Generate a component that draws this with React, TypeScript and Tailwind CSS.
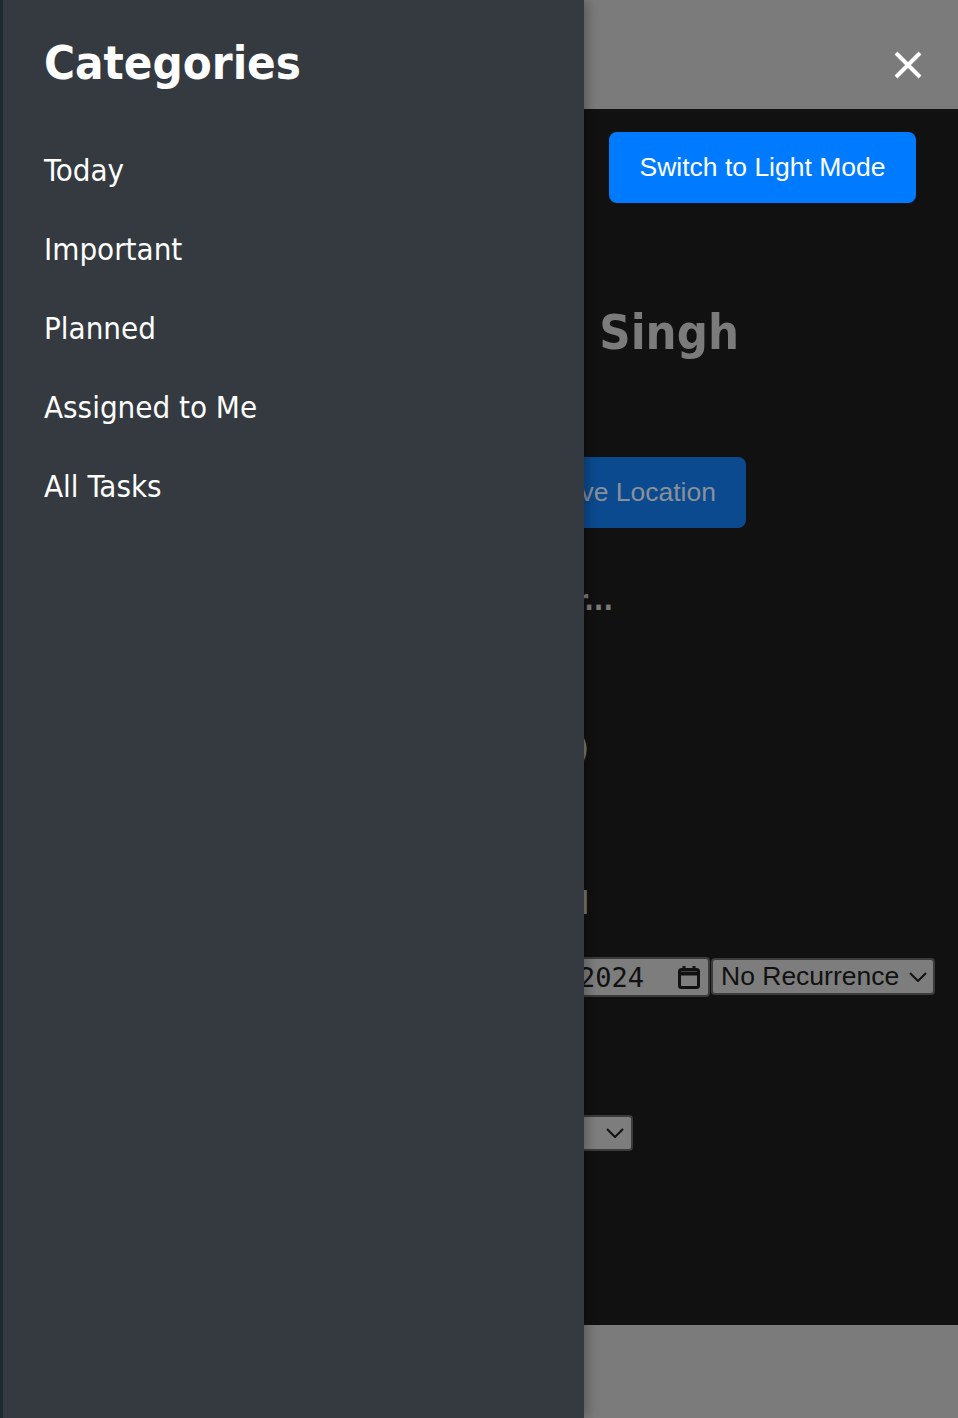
import { useState } from "react";

const categories = ["Today", "Important", "Planned", "Assigned to Me", "All Tasks"];

function CloseIcon() {
  return (
    <svg width="28" height="28" viewBox="0 0 28 28" fill="none">
      <path d="M2 2L26 26M26 2L2 26" stroke="white" strokeWidth="4" />
    </svg>
  );
}

function Chevron() {
  return (
    <svg width="18" height="10" viewBox="0 0 18 10" fill="none">
      <path d="M1 1l8 8 8-8" stroke="#111" strokeWidth="2" />
    </svg>
  );
}

function CalendarIcon() {
  return (
    <svg width="22" height="24" viewBox="0 0 22 24" fill="none">
      <rect x="1.5" y="4.5" width="19" height="18" rx="2" stroke="#111" strokeWidth="3" />
      <path d="M1.5 8.5h19" stroke="#111" strokeWidth="4" />
      <path d="M6 1v5M16 1v5" stroke="#111" strokeWidth="3" />
    </svg>
  );
}

export default function App() {
  const [open, setOpen] = useState(true);

  return (
    <div className="relative h-[1418px] w-full overflow-hidden bg-[#7b7b7c] font-['Liberation_Sans',Arial,sans-serif]">
      <header className="flex h-[109px] items-center justify-end bg-[#7b7b7c] pr-[36px]">
        <button onClick={() => setOpen(!open)} className="mt-[20px] flex h-[28px] w-[28px] items-center justify-center">
          <CloseIcon />
        </button>
      </header>

      <main className="flex h-[1216px] flex-col bg-[#111111] text-[#7b7b7b]">
        <div className="flex justify-end pr-[42px] pt-[23px]">
          <button className="h-[71px] w-[307px] rounded-[8px] bg-[#007bff] text-[26.5px] text-white">
            Switch to Light Mode
          </button>
        </div>

        <h1 className="mt-[100px] w-[739px] whitespace-nowrap text-right font-['DejaVu_Sans_Condensed','DejaVu_Sans',sans-serif] text-[48.5px] font-bold leading-[58px]">
          Jo Singh
        </h1>

        <div className="mt-[96px] flex w-[746px] justify-end">
          <button className="h-[71px] whitespace-nowrap rounded-[8px] bg-[#0b4a8f] px-[30px] text-[26.5px] text-[#8a9099]">
            Save Location
          </button>
        </div>

        <p className="mt-[56px] w-[613px] whitespace-nowrap text-right font-['DejaVu_Sans_Condensed','DejaVu_Sans',sans-serif] text-[28px] font-bold leading-[34px]">
          weather...
        </p>

        <p className="mt-[110px] w-[589px] whitespace-nowrap text-right font-['DejaVu_Sans_Condensed','DejaVu_Sans',sans-serif] text-[32px] leading-[40px]">
          (0)
        </p>

        <h2 className="mt-[115px] w-[589px] whitespace-nowrap text-right font-['DejaVu_Sans_Condensed','DejaVu_Sans',sans-serif] text-[32px] font-bold leading-[40px]">
          Planned
        </h2>

        <div className="mt-[34px] flex w-[935px] items-start justify-end">
          <div className="flex h-[40px] items-center rounded-[4px] border-2 border-[#3b3b3b] bg-[#7d7d7d] px-[8px] text-[#111]">
            <span className="whitespace-nowrap font-['DejaVu_Sans_Mono',monospace] text-[27px] leading-none">12/31/2024</span>
            <span className="ml-[34px] flex">
              <CalendarIcon />
            </span>
          </div>
          <div className="ml-[1px] mt-[1px] flex h-[37px] w-[224px] items-center justify-between rounded-[4px] border-2 border-[#3b3b3b] bg-[#7d7d7d] pl-[8px] pr-[6px] text-[#111]">
            <span className="whitespace-nowrap text-[26.5px] leading-none">No Recurrence</span>
            <Chevron />
          </div>
        </div>

        <div className="mt-[118px] flex w-[633px] justify-end">
          <div className="flex h-[36px] w-[180px] items-center justify-between rounded-[4px] border-2 border-[#3b3b3b] bg-[#7d7d7d] pl-[8px] pr-[7px] text-[#111]">
            <span className="whitespace-nowrap text-[26.5px] leading-none">Medium</span>
            <Chevron />
          </div>
        </div>
      </main>

      <footer className="h-[93px] bg-[#7b7b7c]" />

      {open && (
        <aside className="absolute inset-y-0 left-0 flex w-[584px] flex-col border-l-[3px] border-[#1d2a30] bg-[#343a40] pl-[41px] font-['DejaVu_Sans_Condensed','DejaVu_Sans',sans-serif] text-white shadow-[4px_0_10px_rgba(0,0,0,0.25)]">
          <h2 className="mt-[34px] text-[47px] font-bold leading-[58px]">Categories</h2>
          <ul className="mt-[58px] flex flex-col gap-[39px]">
            {categories.map((c) => (
              <li key={c} className="text-[31px] leading-[40px]">
                {c}
              </li>
            ))}
          </ul>
        </aside>
      )}
    </div>
  );
}
